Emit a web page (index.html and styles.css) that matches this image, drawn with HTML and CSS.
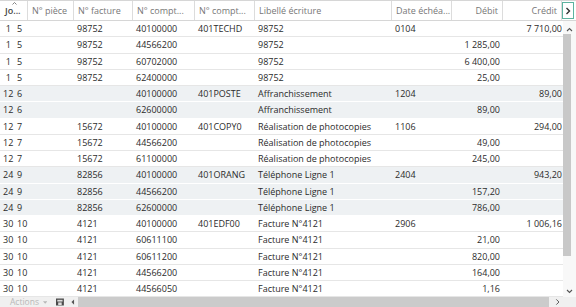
FILE: index.html
```html
<!DOCTYPE html>
<html lang="fr">
<head>
<meta charset="utf-8">
<link rel="stylesheet" href="styles.css">
</head>
<body>
<div class="grid">
  <div class="head">
    <div class="hc hc-jo"><svg class="sort" width="5" height="3" viewBox="0 0 5 3"><path d="M0.5 2.5 L2.5 0.5 L4.5 2.5" fill="none" stroke="#666" stroke-width="0.8"/></svg>Jo...</div>
    <div class="hc">N° pièce</div>
    <div class="hc">N° facture</div>
    <div class="hc">N° compt...</div>
    <div class="hc">N° compt...</div>
    <div class="hc">Libellé écriture</div>
    <div class="hc">Date échéa...</div>
    <div class="hc r">Débit</div>
    <div class="hc r">Crédit</div>
    <div class="hnav"><svg width="6" height="8" viewBox="0 0 6 8"><path d="M1.5 1 L4.5 4 L1.5 7" fill="none" stroke="#333" stroke-width="1.4"/></svg></div>
  </div>
  <div class="body">
    <div class="rows">
      <div class="row"><span class="r">1</span><span>5</span><span>98752</span><span>40100000</span><span>401TECHD</span><span>98752</span><span>0104</span><span class="r"></span><span class="r">7 710,00</span></div>
      <div class="row"><span class="r">1</span><span>5</span><span>98752</span><span>44566200</span><span></span><span>98752</span><span></span><span class="r">1 285,00</span><span class="r"></span></div>
      <div class="row"><span class="r">1</span><span>5</span><span>98752</span><span>60702000</span><span></span><span>98752</span><span></span><span class="r">6 400,00</span><span class="r"></span></div>
      <div class="row"><span class="r">1</span><span>5</span><span>98752</span><span>62400000</span><span></span><span>98752</span><span></span><span class="r">25,00</span><span class="r"></span></div>
      <div class="row alt"><span class="r">12</span><span>6</span><span></span><span>40100000</span><span>401POSTE</span><span>Affranchissement</span><span>1204</span><span class="r"></span><span class="r">89,00</span></div>
      <div class="row alt"><span class="r">12</span><span>6</span><span></span><span>62600000</span><span></span><span>Affranchissement</span><span></span><span class="r">89,00</span><span class="r"></span></div>
      <div class="row"><span class="r">12</span><span>7</span><span>15672</span><span>40100000</span><span>401COPY0</span><span>Réalisation de photocopies</span><span>1106</span><span class="r"></span><span class="r">294,00</span></div>
      <div class="row"><span class="r">12</span><span>7</span><span>15672</span><span>44566200</span><span></span><span>Réalisation de photocopies</span><span></span><span class="r">49,00</span><span class="r"></span></div>
      <div class="row"><span class="r">12</span><span>7</span><span>15672</span><span>61100000</span><span></span><span>Réalisation de photocopies</span><span></span><span class="r">245,00</span><span class="r"></span></div>
      <div class="row alt"><span class="r">24</span><span>9</span><span>82856</span><span>40100000</span><span>401ORANG</span><span>Téléphone Ligne 1</span><span>2404</span><span class="r"></span><span class="r">943,20</span></div>
      <div class="row alt"><span class="r">24</span><span>9</span><span>82856</span><span>44566200</span><span></span><span>Téléphone Ligne 1</span><span></span><span class="r">157,20</span><span class="r"></span></div>
      <div class="row alt"><span class="r">24</span><span>9</span><span>82856</span><span>62600000</span><span></span><span>Téléphone Ligne 1</span><span></span><span class="r">786,00</span><span class="r"></span></div>
      <div class="row"><span class="r">30</span><span>10</span><span>4121</span><span>40100000</span><span>401EDF00</span><span>Facture N°4121</span><span>2906</span><span class="r"></span><span class="r">1 006,16</span></div>
      <div class="row"><span class="r">30</span><span>10</span><span>4121</span><span>60611100</span><span></span><span>Facture N°4121</span><span></span><span class="r">21,00</span><span class="r"></span></div>
      <div class="row"><span class="r">30</span><span>10</span><span>4121</span><span>60611200</span><span></span><span>Facture N°4121</span><span></span><span class="r">820,00</span><span class="r"></span></div>
      <div class="row"><span class="r">30</span><span>10</span><span>4121</span><span>44566200</span><span></span><span>Facture N°4121</span><span></span><span class="r">164,00</span><span class="r"></span></div>
      <div class="row"><span class="r">30</span><span>10</span><span>4121</span><span>44566050</span><span></span><span>Facture N°4121</span><span></span><span class="r">1,16</span><span class="r"></span></div>
    </div>
    <div class="vscroll">
      <svg class="arr" width="7" height="5" viewBox="0 0 7 5"><path d="M1 4 L3.5 1.5 L6 4" fill="none" stroke="#555" stroke-width="1.1"/></svg>
      <div class="vthumb"></div>
      <svg class="arr arr-down" width="7" height="5" viewBox="0 0 7 5"><path d="M1 1 L3.5 3.5 L6 1" fill="none" stroke="#555" stroke-width="1.1"/></svg>
    </div>
  </div>
  <div class="foot">
    <span class="actions">Actions</span>
    <svg class="caret" width="5" height="3" viewBox="0 0 5 3"><path d="M0 0 L5 0 L2.5 3 Z" fill="#b8b8b8"/></svg>
    <svg class="ficon" width="9" height="8" viewBox="0 0 9 8"><rect x="0" y="0" width="9" height="8" fill="#4a4a4a"/><rect x="1.5" y="1.5" width="6" height="2" fill="#ddd"/><rect x="2.5" y="4.5" width="4" height="3" fill="#ddd"/></svg>
    <svg class="harr" width="4" height="6" viewBox="0 0 4 6"><path d="M3.5 0 L0.5 3 L3.5 6 Z" fill="#555"/></svg>
    <div class="htrack"><div class="hthumb"></div></div>
    <svg class="harr-r" width="6" height="8" viewBox="0 0 6 8"><path d="M1.5 1 L4.5 4 L1.5 7" fill="none" stroke="#555" stroke-width="1.1"/></svg>
  </div>
</div>
</body>
</html>
```
FILE: styles.css
```css
* { box-sizing: border-box; }
html, body { margin: 0; padding: 0; }
body {
  width: 576px;
  height: 307px;
  overflow: hidden;
  background: #fff;
  font-family: "Open Sans", "Noto Sans", sans-serif;
  font-size: 9px;
  color: #2b2b2b;
}
.grid { width: 576px; height: 307px; display: flex; flex-direction: column; }
.head {
  height: 21px;
  flex: none;
  display: grid;
  grid-template-columns: 28px 46px 59px 62px 60px 137px 60px 51px 59px 12px;
  border-top: 1px solid #d6d6d6;
  border-bottom: 1px solid #d6d6d6;
  color: #777;
}
.hc {
  padding: 0 4px;
  display: flex;
  align-items: center;
  border-right: 1px solid #dcdcdc;
  white-space: nowrap;
  overflow: hidden;
  position: relative;
}
.hc.r { justify-content: flex-end; }
.hc-jo { padding-left: 5px; color: #444; font-weight: 600; }
.sort { position: absolute; left: 12px; top: 1px; }
.hnav {
  border: 1px solid #5db3a0;
  display: flex; align-items: center; justify-content: center;
  margin: 1px 0;
}
.body { flex: 1; display: flex; min-height: 0; }
.rows { flex: 1; overflow: hidden; }
.row {
  height: 16.25px;
  display: grid;
  grid-template-columns: 14px 60px 59px 62px 60px 137px 60px 51px 1fr;
  border-bottom: 1px solid #e6e6e6;
  align-items: center;
  white-space: nowrap;
}
.row.alt { background: #eef1f3; border-bottom-color: #fff; }
.row span { padding: 0 3px; }
.row span:nth-child(2) { padding-left: 3px; }
.row span:last-child { padding-right: 1px; }
.row .r { text-align: right; }
.vscroll {
  width: 13px;
  display: flex; flex-direction: column; align-items: flex-start;
  background: #f8f8f8;
}
.arr { margin: 6px 0 0 3px; flex: none; }
.vthumb { width: 8px; height: 222px; background: #c8c8c8; margin-top: 2px; }
.arr-down { margin-top: auto; margin-bottom: 3px; }
.foot {
  height: 10px;
  flex: none;
  display: flex; align-items: center;
  background: #f0f0f0;
}
.actions { padding-left: 10px; font-size: 8.5px; line-height: 10px; color: #b8b8b8; }
.caret { margin: 0 9px 0 4px; }
.ficon { margin-right: 7px; }
.harr { margin-right: 3px; }
.htrack { flex: 1; height: 10px; }
.hthumb { width: 471px; height: 10px; background: #cbcbcb; }
.harr-r { margin: 0 16px 0 6px; }
```
